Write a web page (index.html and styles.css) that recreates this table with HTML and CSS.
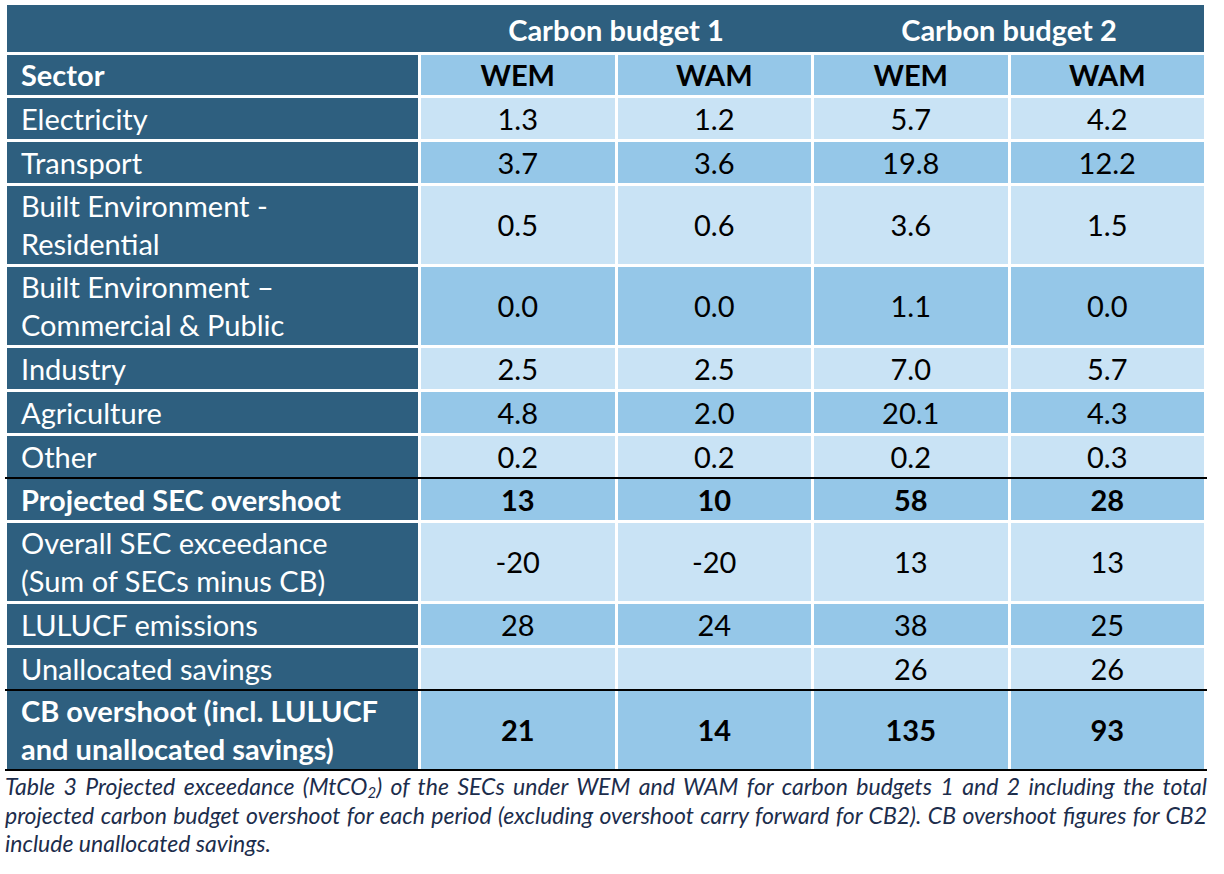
FILE: index.html
```html
<!DOCTYPE html>
<html lang="en">
<head>
<meta charset="utf-8">
<title>Table 3 Projected exceedance</title>
<link rel="stylesheet" href="styles.css">
</head>
<body>
<div class="page">
  <div class="tbl">
    <div class="row head1">
      <div class="cell"></div>
      <div class="cell budget">Carbon budget 1</div>
      <div class="cell budget">Carbon budget 2</div>
    </div>
    <div class="row head2">
      <div class="cell sector bold">Sector</div>
      <div class="cell mid bold">WEM</div>
      <div class="cell mid bold">WAM</div>
      <div class="cell mid bold">WEM</div>
      <div class="cell mid bold">WAM</div>
    </div>
    <div class="row light">
      <div class="cell sector">Electricity</div>
      <div class="cell">1.3</div><div class="cell">1.2</div><div class="cell">5.7</div><div class="cell">4.2</div>
    </div>
    <div class="row mid">
      <div class="cell sector">Transport</div>
      <div class="cell">3.7</div><div class="cell">3.6</div><div class="cell">19.8</div><div class="cell">12.2</div>
    </div>
    <div class="row light tall">
      <div class="cell sector">Built Environment -<br>Residential</div>
      <div class="cell">0.5</div><div class="cell">0.6</div><div class="cell">3.6</div><div class="cell">1.5</div>
    </div>
    <div class="row mid tall">
      <div class="cell sector">Built Environment –<br>Commercial &amp; Public</div>
      <div class="cell">0.0</div><div class="cell">0.0</div><div class="cell">1.1</div><div class="cell">0.0</div>
    </div>
    <div class="row light">
      <div class="cell sector">Industry</div>
      <div class="cell">2.5</div><div class="cell">2.5</div><div class="cell">7.0</div><div class="cell">5.7</div>
    </div>
    <div class="row mid">
      <div class="cell sector">Agriculture</div>
      <div class="cell">4.8</div><div class="cell">2.0</div><div class="cell">20.1</div><div class="cell">4.3</div>
    </div>
    <div class="row light">
      <div class="cell sector">Other</div>
      <div class="cell">0.2</div><div class="cell">0.2</div><div class="cell">0.2</div><div class="cell">0.3</div>
    </div>
    <div class="rule"></div>
    <div class="row mid after-rule">
      <div class="cell sector bold">Projected SEC overshoot</div>
      <div class="cell bold">13</div><div class="cell bold">10</div><div class="cell bold">58</div><div class="cell bold">28</div>
    </div>
    <div class="row light tall">
      <div class="cell sector">Overall SEC exceedance<br>(Sum of SECs minus CB)</div>
      <div class="cell">-20</div><div class="cell">-20</div><div class="cell">13</div><div class="cell">13</div>
    </div>
    <div class="row mid">
      <div class="cell sector">LULUCF emissions</div>
      <div class="cell">28</div><div class="cell">24</div><div class="cell">38</div><div class="cell">25</div>
    </div>
    <div class="row light">
      <div class="cell sector">Unallocated savings</div>
      <div class="cell"></div><div class="cell"></div><div class="cell">26</div><div class="cell">26</div>
    </div>
    <div class="rule"></div>
    <div class="row mid tall after-rule">
      <div class="cell sector bold">CB overshoot (incl. LULUCF<br>and unallocated savings)</div>
      <div class="cell bold">21</div><div class="cell bold">14</div><div class="cell bold">135</div><div class="cell bold">93</div>
    </div>
    <div class="rule"></div>
  </div>
  <p class="caption">
    <span class="cap-line">Table 3 Projected exceedance (MtCO<sub>2</sub>) of the SECs under WEM and WAM for carbon budgets 1 and 2 including the total</span>
    <span class="cap-line">projected carbon budget overshoot for each period (excluding overshoot carry forward for CB2). CB overshoot figures for CB2</span>
    <span class="cap-line last">include unallocated savings.</span>
  </p>
</div>
</body>
</html>
```

FILE: styles.css
```css
* {
  box-sizing: border-box;
}

html, body {
  margin: 0;
  padding: 0;
  background: #ffffff;
}

body {
  font-family: Lato, "Open Sans", sans-serif;
  color: #000000;
}

.page {
  padding: 5px 0 0 0;
  width: 1224px;
}

.tbl {
  margin-left: 7px;
  width: 1197px;
  display: flex;
  flex-direction: column;
}

.row {
  display: grid;
  grid-template-columns: 411px repeat(4, 1fr);
  column-gap: 3px;
  height: 41px;
  margin-top: 3px;
  font-size: 29px;
}

.row.tall {
  height: 78px;
}

.row.after-rule {
  margin-top: 0;
}

.head1 {
  margin-top: 0;
  height: 47px;
  background: #2e5f7f;
}

.head1 .budget {
  grid-column: span 2;
  color: #ffffff;
  font-weight: 700;
  padding-top: 2px;
}

.head2 {
  height: 40px;
}

.cell {
  display: flex;
  align-items: center;
  justify-content: center;
  line-height: 38px;
  white-space: nowrap;
}

.light .cell {
  background: #c9e3f5;
}

.mid .cell,
.cell.mid {
  background: #95c7e8;
}

.row .cell.sector {
  background: #2e5f7f;
  color: #ffffff;
  justify-content: flex-start;
  text-align: left;
  padding-left: 14px;
}

.head1 .cell {
  background: transparent;
}

.bold {
  font-weight: 700;
}

.rule {
  height: 2px;
  background: #000000;
  margin: 0 -3px 0 -2px;
}

.caption {
  margin: 1px 0 0 5px;
  width: 1202px;
  font-style: italic;
  font-size: 23px;
  line-height: 28.5px;
  color: #1c2d4c;
}

.cap-line {
  display: block;
  text-align: justify;
  text-align-last: justify;
}

.cap-line.last {
  text-align-last: left;
}

.caption sub {
  font-size: 0.65em;
  line-height: 0;
  vertical-align: -0.2em;
}
```
